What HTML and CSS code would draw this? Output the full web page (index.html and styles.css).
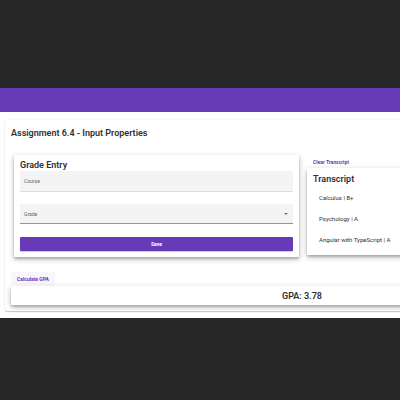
FILE: index.html
```
<!DOCTYPE html>
<html lang="en">
<head>
<meta charset="utf-8">
<title>Input Properties</title>
<link rel="stylesheet" href="styles.css">
</head>
<body>
<div class="page">
  <header class="toolbar"></header>
  <main class="content">
    <section class="card assignment">
      <h1 class="title">Assignment 6.4 - Input Properties</h1>
      <div class="columns">
        <form class="card raised entry">
          <h2 class="heading">Grade Entry</h2>
          <div class="field">
            <label for="course">Course</label>
            <input id="course" type="text">
          </div>
          <div class="field field-select">
            <label for="grade">Grade</label>
            <select id="grade">
              <option value=""></option>
              <option>A</option>
              <option>B+</option>
            </select>
            <svg class="arrow" viewBox="0 0 4 2" aria-hidden="true"><path d="M0 0h4L2 2z"/></svg>
          </div>
          <button class="save" type="button">Save</button>
        </form>
        <div class="side">
          <button class="link-button" type="button">Clear Transcript</button>
          <section class="card raised transcript">
            <h2 class="heading">Transcript</h2>
            <ul class="courses">
              <li>Calculus | B+</li>
              <li>Psychology | A</li>
              <li>Angular with TypeScript | A</li>
            </ul>
          </section>
        </div>
      </div>
      <button class="link-button calculate" type="button">Calculate GPA</button>
      <div class="card raised gpa">GPA: 3.78</div>
    </section>
  </main>
</div>
</body>
</html>
```
FILE: styles.css
```
* {
  box-sizing: border-box;
}

body {
  margin: 0;
  min-height: 100vh;
  display: flex;
  align-items: center;
  overflow: hidden;
  background: #272727;
  color: #303030;
  font-family: Roboto, "Liberation Sans", sans-serif;
  font-size: 6px;
  line-height: 8px;
}

button,
input,
select {
  font: inherit;
  border: 0;
  padding: 0;
  background: transparent;
}

h1,
h2,
ul {
  margin: 0;
  padding: 0;
}

/* The page is wider than the window and runs off its right edge. */
.page {
  flex: none;
  width: 151vw;
  margin-top: 6px;
  background: #fff;
}

.toolbar {
  height: 24px;
  background: #673ab7;
}

.content {
  padding: 8px 5px 7px;
}

.card {
  background: #fff;
  border-radius: 2px;
  box-shadow: 0 1px 1px rgba(0, 0, 0, 0.2), 0 0 2px rgba(0, 0, 0, 0.12);
}

.raised {
  border-radius: 1px;
  box-shadow: 0 2px 3px rgba(0, 0, 0, 0.24), 0 2px 6px rgba(0, 0, 0, 0.2);
}

.assignment {
  padding: 7px 6px 6px;
}

.title,
.heading,
.gpa {
  font-size: 9px;
  line-height: 12px;
  font-weight: 600;
}

.columns {
  display: grid;
  grid-template-columns: 1fr 1fr;
  align-items: start;
  gap: 8px;
  margin: 16px 1px 15px 3px;
}

.entry {
  padding: 4px 6px 6px;
}

.field {
  display: flex;
  align-items: center;
  height: 21px;
  padding: 0 4px;
  background: #f4f4f4;
  border-bottom: 1px solid #ddd;
  border-radius: 1px 1px 0 0;
  color: #666;
  font-size: 5px;
}

.field input,
.field select {
  flex: 1;
  min-width: 0;
  height: 100%;
  appearance: none;
  outline: 0;
}

.field-select {
  height: 20px;
  margin: 12px 0 13px;
  border-bottom-color: #949494;
}

.arrow {
  width: 4px;
  height: 2px;
  margin-right: 1px;
  fill: #757575;
}

.save {
  display: block;
  width: 100%;
  height: 14px;
  border-radius: 1px;
  background: #673ab7;
  box-shadow: 0 1px 1px rgba(0, 0, 0, 0.2);
  color: #fff;
  font-size: 5px;
  font-weight: 700;
}

.link-button {
  display: block;
  height: 13px;
  padding: 0 6px;
  border-radius: 1px;
  color: #673ab7;
  font-size: 5px;
  font-weight: 700;
}

.transcript {
  padding: 5px 6px;
}

.courses {
  margin-top: 2px;
  list-style: none;
}

.courses li {
  display: flex;
  align-items: center;
  height: 21px;
  padding-left: 6px;
}

.calculate {
  margin-bottom: 1px;
  background: #f8f5fc;
}

.gpa {
  padding: 4px 4px 3px;
  text-align: center;
}
```
